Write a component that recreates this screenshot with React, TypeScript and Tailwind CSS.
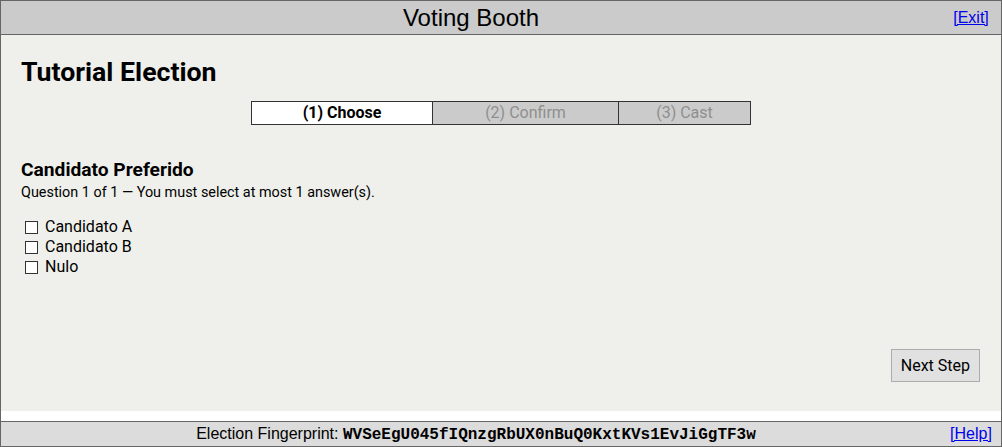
import { useState } from 'react';

const candidates = ['Candidato A', 'Candidato B', 'Nulo'];

const steps = [
  { label: '(1) Choose', width: 'w-[180px]', active: true },
  { label: '(2) Confirm', width: 'w-[186px]', active: false },
  { label: '(3) Cast', width: 'w-[132px]', active: false },
];

export default function App() {
  const [checked, setChecked] = useState<boolean[]>([false, false, false]);

  const toggle = (i: number) => {
    setChecked((prev) => prev.map((v, j) => (j === i ? !v : v)));
  };

  return (
    <div className="w-[1002px] h-[447px] bg-white flex flex-col font-['Roboto',sans-serif] text-black">
      {/* header */}
      <div className="h-[35px] shrink-0 flex border border-[#666] bg-[#cbcbcb]">
        <div className="flex-1 text-center font-['Liberation_Sans',sans-serif] text-[24px] leading-[33px]">
          Voting Booth
        </div>
        <div className="w-[60px] text-center font-['Liberation_Sans',sans-serif] text-[16px] leading-[33px]">
          <a href="#" className="text-[#0000ee] underline">[Exit]</a>
        </div>
      </div>

      {/* body */}
      <div className="flex-1 flex flex-col border-x border-[#666] bg-white">
        <div className="h-[376px] flex flex-col bg-[#eff0eb] px-5 pt-[22px] pb-[29px]">
          <h1 className="text-[26.7px] font-bold leading-[31px]">Tutorial Election</h1>

          <div className="mt-[13px] flex justify-center">
            <div className="flex border border-[#333] text-[16px] leading-[22px]">
              {steps.map((s, i) => (
                <div
                  key={s.label}
                  className={`${s.width} text-center ${i > 0 ? 'border-l border-[#333]' : ''} ${
                    s.active ? 'bg-white font-bold text-black' : 'bg-[#cbcbcb] text-[#8f8f8f]'
                  }`}
                >
                  {s.label}
                </div>
              ))}
            </div>
          </div>

          <h2 className="mt-[34px] text-[19.2px] font-bold leading-[22px]">Candidato Preferido</h2>
          <div className="mt-[3px] text-[14.4px] leading-[17px]">
            Question 1 of 1 — You must select at most 1 answer(s).
          </div>

          <div className="mt-[16px] flex flex-col text-[16px] leading-[20px]">
            {candidates.map((c, i) => (
              <label key={c} className="flex items-center">
                <input
                  type="checkbox"
                  checked={checked[i]}
                  onChange={() => toggle(i)}
                  className="appearance-none w-[13px] h-[13px] ml-1 mr-[7px] border border-[#333] bg-white checked:bg-[#333]"
                />
                {c}
              </label>
            ))}
          </div>

          <div className="mt-auto flex justify-end">
            <button className="h-[33px] mr-px px-[9px] border border-[#adadad] bg-[#e1e1e1] text-[16px]">
              Next Step
            </button>
          </div>
        </div>
      </div>

      {/* footer */}
      <div className="h-[26px] shrink-0 flex border border-[#666] bg-[#dcdcdc] font-['Liberation_Sans',sans-serif] text-[16px] leading-[24px]">
        <div className="flex-1 pl-[10px] text-center">
          Election Fingerprint:{' '}
          <span className="font-['Liberation_Mono',monospace] font-bold">WVSeEgU045fIQnzgRbUX0nBuQ0KxtKVs1EvJiGgTF3w</span>
        </div>
        <div className="w-[60px] text-center">
          <a href="#" className="text-[#0000ee] underline">[Help]</a>
        </div>
      </div>
    </div>
  );
}
